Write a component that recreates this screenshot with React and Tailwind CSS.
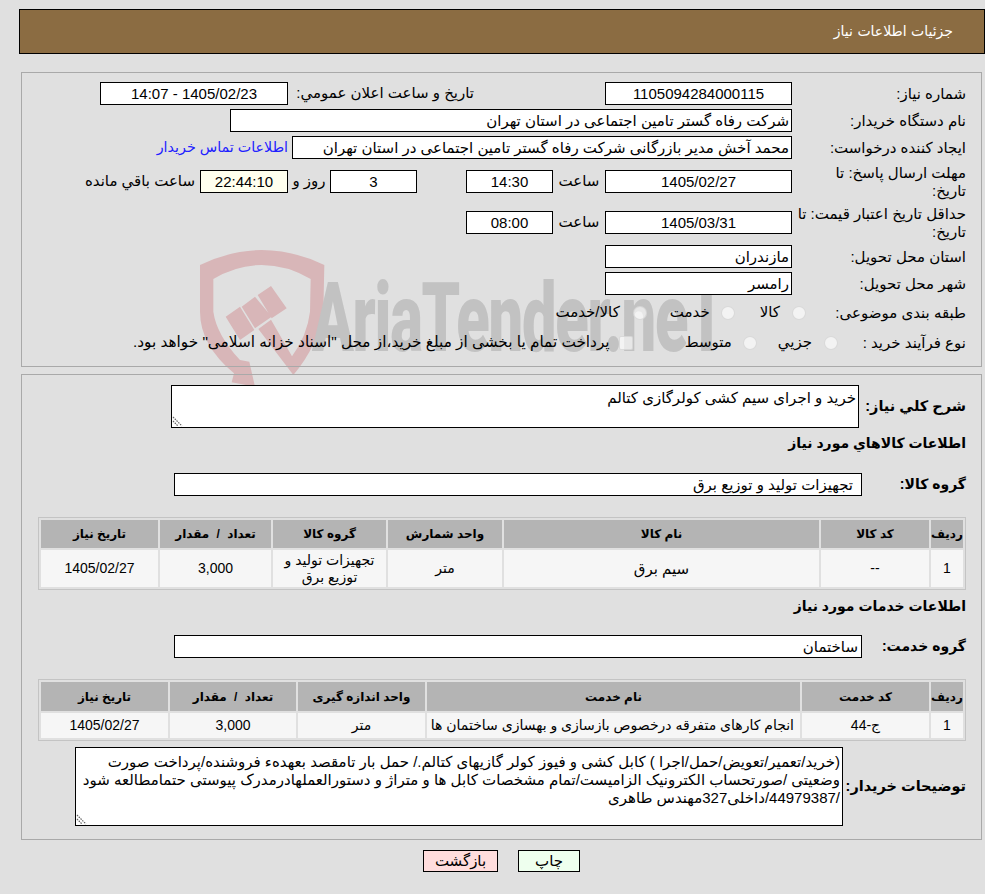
const F = "font-['Liberation_Sans','DejaVu_Sans',sans-serif]";

function Box({ w, children, className = "", align = "text-center" }) {
  return (
    <div className={`h-[23px] shrink-0 border border-black bg-white text-[15px] leading-[21px] text-black whitespace-nowrap overflow-hidden ${align} ${className}`} style={{ width: w }}>
      {children}
    </div>
  );
}

function Label({ children, className = "" }) {
  return <div className={`w-[189px] shrink-0 pr-[15px] text-[15px] leading-[18px] text-black whitespace-nowrap ${className}`}>{children}</div>;
}

function Radio({ className = "" }) {
  return <span className={`inline-block h-[14px] w-[14px] shrink-0 rounded-full border border-[#cfcfcf]/70 bg-white/60 ${className}`} />;
}

function Grip() {
  return (
    <svg className="absolute bottom-0 left-0" width="12" height="12" viewBox="0 0 12 12">
      <path d="M1 2 L10 11 M1 6 L6 11" stroke="#666" strokeWidth="1.2" strokeDasharray="1.5 1" fill="none" />
    </svg>
  );
}

function Watermark() {
  return (
    <div className="pointer-events-none absolute left-0 top-0 h-[400px] w-[800px]">
      <svg className="absolute left-[190px] top-[245px]" width="160" height="145" viewBox="0 0 480 435">
        <path
          d="M30 60 Q125 15 215 15 Q310 15 403 60 L400 200 Q385 300 310 390 L205 252 L243 224 L306 334 Q352 270 360 200 L362 102 Q290 60 215 60 Q140 60 70 102 L70 200 Q80 270 150 345 L178 350 L195 425 L125 412 L132 385 Q30 300 30 200 Z"
          fill="#d8b6b8"
        />
        <path d="M107 215 L150 185 L193 255 L150 285 Z M155 185 L195 155 L245 215 L195 250 Z M203 150 L243 123 L290 190 L245 220 Z" fill="#d8b6b8" />
      </svg>
      <div className="absolute left-[312px] top-[263px] origin-left whitespace-nowrap font-['Roboto',sans-serif] text-[96px] font-black leading-[110px] tracking-[-2px] text-[#c2c2c2] [transform:scaleX(0.64)]">
        AriaTender.neT
      </div>
    </div>
  );
}

function GridTable({ cols, head, rows, headH, rowH }) {
  return (
    <div className="ml-[16px] mr-[15px] border border-[#c4c4c4]">
      <table dir="rtl" className="w-full table-fixed border-separate border-spacing-[2px] text-[14px] text-black">
        <colgroup>
          {cols.map((c, i) => <col key={i} style={{ width: c }} />)}
        </colgroup>
        <thead>
          <tr>
            {head.map((h, i) => (
              <th key={i} className="bg-[#b4b4b4] p-0 text-center text-[12px] font-bold" style={{ height: headH }}>{h}</th>
            ))}
          </tr>
        </thead>
        <tbody>
          {rows.map((r, ri) => (
            <tr key={ri}>
              {r.map((c, i) => (
                <td key={i} className={`bg-[#f6f6f6] p-0 leading-[17px] ${c.right ? "pr-[6px] text-right whitespace-nowrap" : "text-center"}`} style={{ height: rowH }}>{c.t ?? c}</td>
              ))}
            </tr>
          ))}
        </tbody>
      </table>
    </div>
  );
}

const Qty = () => <span className="[word-spacing:4px]">تعداد / مقدار</span>;

export default function App() {
  return (
    <div dir="rtl" className={`relative min-h-[894px] w-[985px] overflow-hidden bg-[#e0e0e0] pt-[9px] ${F}`}>
      <Watermark />
      <div className="relative">
        <div className="ml-[19px] flex h-[45px] items-center border border-black bg-[#8b6c42] pr-[31px] font-['DejaVu_Sans',sans-serif] text-[14px] text-white">
          جزئیات اطلاعات نیاز
        </div>

        <div className="ml-[21px] mr-[3px] mt-[18px] h-[295px] border border-[#a9a9a9] pt-[7px]">
          <div className="flex h-[27px] items-center">
            <Label>شماره نیاز:</Label>
            <Box w={187}>1105094284000115</Box>
            <div className="w-[317px] shrink-0 whitespace-nowrap pr-[131px] text-[15px]">تاریخ و ساعت اعلان عمومي:</div>
            <Box w={188}>1405/02/23 - 14:07</Box>
          </div>
          <div className="flex h-[27px] items-center">
            <Label>نام دستگاه خریدار:</Label>
            <Box w={562} align="text-right pr-[2px]">شرکت رفاه گستر تامین اجتماعی در استان تهران</Box>
          </div>
          <div className="flex h-[27px] items-center">
            <Label>ایجاد کننده درخواست:</Label>
            <Box w={500} align="text-right pr-[2px]">محمد آخش مدیر بازرگانی شرکت رفاه گستر تامین اجتماعی در استان تهران</Box>
            <a className="mr-[4px] whitespace-nowrap text-[14.3px] text-[#2020ff]">اطلاعات تماس خریدار</a>
          </div>
          <div className="flex h-[41px] items-center">
            <Label>مهلت ارسال پاسخ: تا<br />تاریخ:</Label>
            <Box w={187}>1405/02/27</Box>
            <div className="w-[52px] shrink-0 text-center text-[15px]">ساعت</div>
            <Box w={87}>14:30</Box>
            <div className="w-[49px] shrink-0" />
            <Box w={87}>3</Box>
            <div className="w-[42px] shrink-0 text-center text-[15px]">روز و</div>
            <Box w={88} className="!bg-[#ffffee]">22:44:10</Box>
            <div className="mr-[5px] whitespace-nowrap text-[15px]">ساعت باقي مانده</div>
          </div>
          <div className="flex h-[41px] items-center">
            <Label>حداقل تاریخ اعتبار قیمت: تا<br />تاریخ:</Label>
            <Box w={187}>1405/03/31</Box>
            <div className="w-[52px] shrink-0 text-center text-[15px]">ساعت</div>
            <Box w={87}>08:00</Box>
          </div>
          <div className="flex h-[27px] items-center">
            <Label>استان محل تحویل:</Label>
            <Box w={187} align="text-right pr-[2px]">مازندران</Box>
          </div>
          <div className="flex h-[27px] items-center">
            <Label>شهر محل تحویل:</Label>
            <Box w={187} align="text-right pr-[2px]">رامسر</Box>
          </div>
          <div className="flex h-[31px] items-center text-[15px]">
            <Label>طبقه بندی موضوعی:</Label>
            <div className="flex items-center whitespace-nowrap">
              <Radio className="mr-[-14px]" />
              <span className="mr-[12px]">کالا</span>
              <Radio className="mr-[25px]" />
              <span className="mr-[11px]">خدمت</span>
              <Radio className="mr-[23px]" />
              <span className="mr-[13px]">کالا/خدمت</span>
            </div>
          </div>
          <div className="flex h-[29px] items-center text-[15px]">
            <Label>نوع فرآیند خرید :</Label>
            <div className="flex items-center whitespace-nowrap">
              <Radio className="mr-[-46px]" />
              <span className="mr-[12px]">جزیي</span>
              <Radio className="mr-[21px]" />
              <span className="mr-[11px]">متوسط</span>
              <span className="mr-[52px] inline-block h-[14px] w-[14px] shrink-0 rounded-[2px] border border-[#cfcfcf]/70 bg-white/60" />
              <span className="mr-[9px] text-[15.3px]">پرداخت تمام یا بخشی از مبلغ خرید،از محل "اسناد خزانه اسلامی" خواهد بود.</span>
            </div>
          </div>
        </div>

        <div className="ml-[21px] mr-[3px] mt-[7px] h-[466px] border border-[#a9a9a9]">
          <div className="mt-[10px] flex items-start">
            <div className="w-[122px] shrink-0 whitespace-nowrap pr-[15px] pt-[12px] text-[14.5px] font-bold leading-[18px]">شرح کلي نیاز:</div>
            <div className="relative h-[43px] w-[688px] border border-black bg-white pr-[2px] pt-[2px] text-[15px] leading-[20px]">
              خرید و اجرای سیم کشی کولرگازی کتالم
              <Grip />
            </div>
          </div>
          <div className="mt-[3px] h-[24px] pr-[15px] text-[14px] font-bold leading-[24px]">اطلاعات کالاهاي مورد نیاز</div>
          <div className="mt-[18px] flex items-center">
            <div className="w-[119px] shrink-0 whitespace-nowrap pr-[15px] text-[14px] font-bold">گروه کالا:</div>
            <Box w={688} align="text-right pr-[8px]">تجهیزات تولید و توزیع برق</Box>
          </div>
          <div className="mt-[21px]">
            <GridTable
              cols={["32px", "108px", "315px", "114px", "113px", "111px", "117px"]}
              head={["ردیف", "کد کالا", "نام کالا", "واحد شمارش", "گروه کالا", <Qty />, "تاریخ نیاز"]}
              rows={[["1", "--", <span className="text-[15px]">سیم برق</span>, "متر", "تجهیزات تولید و توزیع برق", "3,000", "1405/02/27"]]}
              headH="28px"
              rowH="37px"
            />
          </div>
          <div className="mt-[4px] h-[24px] pr-[15px] text-[14px] font-bold leading-[24px]">اطلاعات خدمات مورد نیاز</div>
          <div className="mt-[17px] flex items-center">
            <div className="w-[119px] shrink-0 whitespace-nowrap pr-[15px] text-[14px] font-bold">گروه خدمت:</div>
            <Box w={688} align="text-right pr-[3px]">ساختمان</Box>
          </div>
          <div className="mt-[21px]">
            <GridTable
              cols={["32px", "127px", "373px", "127px", "126px", "127px"]}
              head={["ردیف", "کد خدمت", "نام خدمت", "واحد اندازه گیری", <Qty />, "تاریخ نیاز"]}
              rows={[["1", "ج-44", { t: "انجام کارهای متفرقه درخصوص بازسازی و بهسازی ساختمان ها", right: true }, "متر", "3,000", "1405/02/27"]]}
              headH="29px"
              rowH="25px"
            />
          </div>
          <div className="mt-[6px] flex items-center">
            <div className="w-[138px] shrink-0 whitespace-nowrap pr-[15px] text-[14.5px] font-bold">توضیحات خریدار:</div>
            <div className="relative h-[79px] w-[768px] border border-black bg-white px-[2px] pt-[5px] text-[15px] leading-[18px]">
              (خرید/تعمیر/تعویض/حمل/اجرا ) کابل کشی و فیوز کولر گازیهای کتالم./ حمل بار تامقصد بعهدهء فروشنده/پرداخت صورت وضعیتی /صورتحساب الکترونیک الزامیست/تمام مشخصات کابل ها و متراژ و دستورالعملهادرمدرک پیوستی حتمامطالعه شود /44979387/داخلی327مهندس طاهری
              <Grip />
            </div>
          </div>
        </div>

        <div className="mt-[10px] flex gap-[20px] pr-[405px] text-[15px]">
          <div className="flex h-[22px] w-[62px] items-center justify-center border border-black bg-[#eeffee]">چاپ</div>
          <div className="flex h-[22px] w-[75px] items-center justify-center border border-black bg-[#ffdddd]">بازگشت</div>
        </div>
      </div>
    </div>
  );
}
